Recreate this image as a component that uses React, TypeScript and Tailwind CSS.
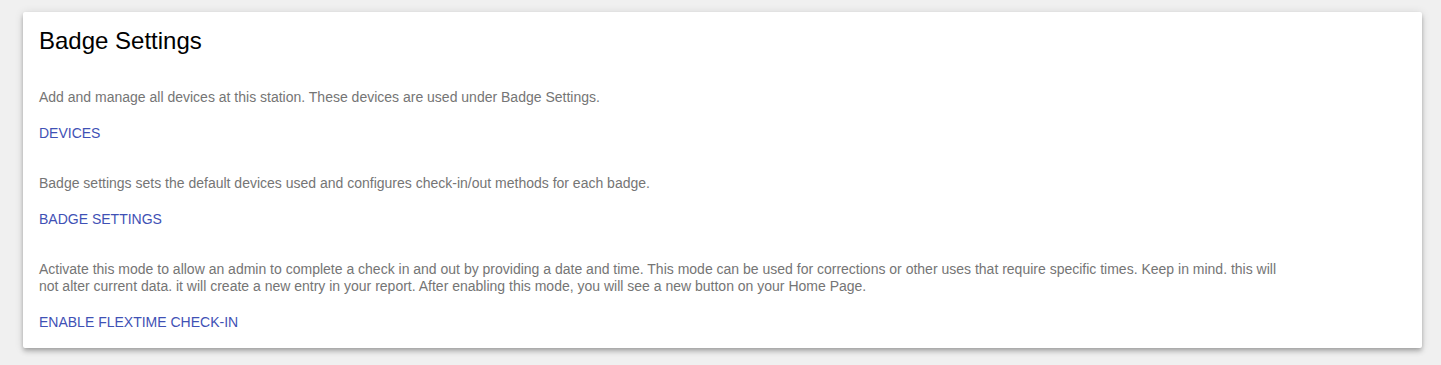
const sections = [
    {
        text: 'Add and manage all devices at this station. These devices are used under Badge Settings.',
        link: 'Devices',
    },
    {
        text: 'Badge settings sets the default devices used and configures check-in/out methods for each badge.',
        link: 'Badge Settings',
    },
    {
        text: 'Activate this mode to allow an admin to complete a check in and out by providing a date and time. This mode can be used for corrections or other uses that require specific times. Keep in mind. this will not alter current data. it will create a new entry in your report. After enabling this mode, you will see a new button on your Home Page.',
        link: 'Enable Flextime Check-In',
    },
]

const App = () => {
    return (
        <div className="min-h-[365px] bg-[#f0f0f0] pl-[23px] pr-[19px] pt-[12px] pb-[17px] font-['Liberation_Sans',Arial,sans-serif]">
            <section className="rounded-[2px] bg-white px-4 pt-[15px] pb-[18px] shadow-[0_2px_4px_-1px_rgba(0,0,0,0.2),0_4px_5px_0_rgba(0,0,0,0.14),0_1px_10px_0_rgba(0,0,0,0.12)]">
                <h1 className="text-[24px] leading-[28px] text-black">Badge Settings</h1>

                {sections.map((section) => (
                    <div key={section.link} className="mt-[34px]">
                        <p className="max-w-[1250px] text-[14px] leading-[17px] text-[#757575]">{section.text}</p>
                        <button
                            type="button"
                            className="mt-[19px] block text-[14px] leading-[16px] uppercase text-[#3f51b5]"
                        >
                            {section.link}
                        </button>
                    </div>
                ))}
            </section>
        </div>
    )
}

export default App
